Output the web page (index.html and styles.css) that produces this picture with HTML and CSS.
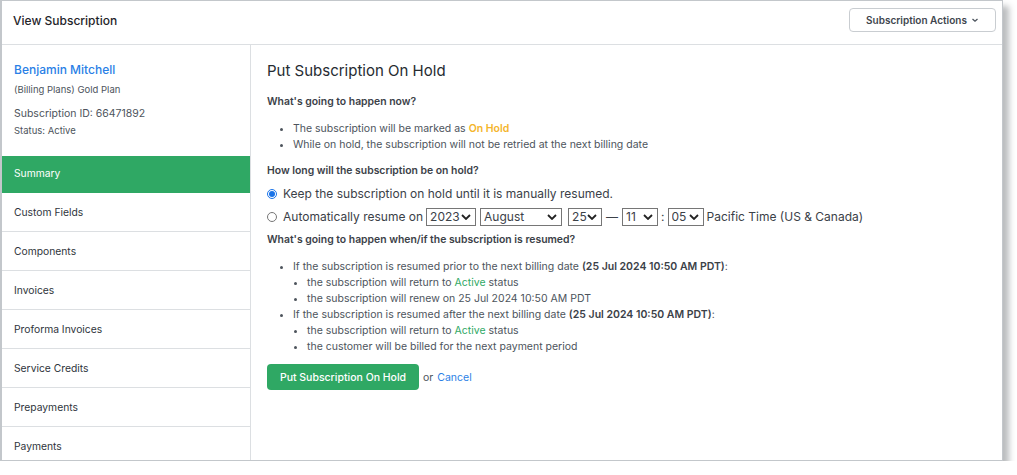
FILE: index.html
```html
<!DOCTYPE html>
<html lang="en">
<head>
    <meta charset="UTF-8">
    <meta name="viewport" content="width=device-width, initial-scale=1.0">
    <title>View Subscription</title>
    <link rel="stylesheet" href="styles.css">
</head>
<body>
    <div class="frame">
        <header class="topbar">
            <h1 class="page-title">View Subscription</h1>
            <button class="actions-btn">Subscription Actions
                <svg width="8" height="6" viewBox="0 0 8 6"><path d="M1.5 2l2.5 2.2L6.5 2" fill="none" stroke="#4a525c" stroke-width="1.3"/></svg>
            </button>
        </header>

        <div class="layout">
            <aside class="sidebar">
                <div class="customer">
                    <a class="customer-name" href="#">Benjamin Mitchell</a>
                    <div class="plan">(Billing Plans) Gold Plan</div>
                    <div class="sub-id">Subscription ID: 66471892</div>
                    <div class="status">Status: Active</div>
                </div>
                <nav class="nav">
                    <a class="nav-item active" href="#">Summary</a>
                    <a class="nav-item" href="#">Custom Fields</a>
                    <a class="nav-item" href="#">Components</a>
                    <a class="nav-item" href="#">Invoices</a>
                    <a class="nav-item" href="#">Proforma Invoices</a>
                    <a class="nav-item" href="#">Service Credits</a>
                    <a class="nav-item" href="#">Prepayments</a>
                    <a class="nav-item" href="#">Payments</a>
                </nav>
            </aside>

            <main class="content">
                <h2 class="content-title">Put Subscription On Hold</h2>

                <h3 class="question">What's going to happen now?</h3>
                <ul class="bullets">
                    <li>The subscription will be marked as <span class="on-hold">On Hold</span></li>
                    <li>While on hold, the subscription will not be retried at the next billing date</li>
                </ul>

                <h3 class="question">How long will the subscription be on hold?</h3>
                <div class="radios">
                    <label class="radio-row">
                        <input type="radio" name="hold" checked>
                        Keep the subscription on hold until it is manually resumed.
                    </label>
                    <label class="radio-row">
                        <input type="radio" name="hold">
                        Automatically resume on
                        <span class="sel w-year"><select><option>2023</option></select><svg viewBox="0 0 10 6"><path d="M1 1l4 4 4-4" fill="none" stroke="#222" stroke-width="1.8"/></svg></span>
                        <span class="sel w-month"><select><option>August</option></select><svg viewBox="0 0 10 6"><path d="M1 1l4 4 4-4" fill="none" stroke="#222" stroke-width="1.8"/></svg></span>
                        <span class="sel w-day"><select><option>25</option></select><svg viewBox="0 0 10 6"><path d="M1 1l4 4 4-4" fill="none" stroke="#222" stroke-width="1.8"/></svg></span>
                        <span class="dash">&mdash;</span>
                        <span class="sel w-hour"><select><option>11</option></select><svg viewBox="0 0 10 6"><path d="M1 1l4 4 4-4" fill="none" stroke="#222" stroke-width="1.8"/></svg></span>
                        :
                        <span class="sel w-min"><select><option>05</option></select><svg viewBox="0 0 10 6"><path d="M1 1l4 4 4-4" fill="none" stroke="#222" stroke-width="1.8"/></svg></span>
                        Pacific Time (US &amp; Canada)
                    </label>
                </div>

                <h3 class="question">What's going to happen when/if the subscription is resumed?</h3>
                <ul class="bullets last">
                    <li>If the subscription is resumed prior to the next billing date <b>(25 Jul 2024 10:50 AM PDT)</b>:
                        <ul>
                            <li>the subscription will return to <span class="active-word">Active</span> status</li>
                            <li>the subscription will renew on 25 Jul 2024 10:50 AM PDT</li>
                        </ul>
                    </li>
                    <li>If the subscription is resumed after the next billing date <b>(25 Jul 2024 10:50 AM PDT)</b>:
                        <ul>
                            <li>the subscription will return to <span class="active-word">Active</span> status</li>
                            <li>the customer will be billed for the next payment period</li>
                        </ul>
                    </li>
                </ul>

                <div class="form-actions">
                    <button class="primary-btn">Put Subscription On Hold</button>
                    <span class="or">or</span> <a class="cancel" href="#">Cancel</a>
                </div>
            </main>
        </div>
    </div>
</body>
</html>
```

FILE: styles.css
```css
* { box-sizing: border-box; }
body { margin: 0; background: #fff; font-family: Inter, "Noto Sans", sans-serif; color: #4b525b; }
a { text-decoration: none; }

.frame { width: 1003px; height: 461px; border: 1px solid #c3c7cb; border-left-width: 2px; background: #fff; box-shadow: 6px 6px 6px rgba(60, 66, 72, 0.35); overflow: hidden; }

.topbar { height: 44px; display: flex; align-items: flex-start; justify-content: space-between; padding: 7px 6px 0 11px; border-bottom: 1px solid #dcdfe2; }
.page-title { margin: 5px 0 0; font-size: 12px; line-height: 15px; font-weight: 500; color: #1f242a; }
.actions-btn { display: flex; align-items: center; justify-content: center; gap: 4px; width: 147px; height: 24px; padding: 0; white-space: nowrap; background: #fff; border: 1px solid #c9cdd1; border-radius: 4px; font-family: inherit; font-size: 10px; font-weight: 600; color: #3e454d; }

.layout { display: flex; height: 415px; }
.sidebar { width: 249px; flex-shrink: 0; border-right: 1px solid #dcdfe2; }
.customer { padding: 17px 12px 18px; }
.customer-name { display: block; font-size: 12px; font-weight: 500; color: #2a7fe6; line-height: 16px; }
.plan { font-size: 9.5px; line-height: 14px; margin-top: 5px; color: #4d545c; }
.sub-id { font-size: 10.5px; line-height: 14px; margin-top: 10px; color: #4d545c; }
.status { font-size: 9.5px; line-height: 14px; margin-top: 3px; color: #4d545c; }

.nav-item { display: block; height: 39px; line-height: 38px; padding: 0 12px; font-size: 10.3px; color: #2f353c; border-bottom: 1px solid #dcdfe2; }
.nav-item.active { background: #2fa864; color: #fff; height: 37px; line-height: 35px; border-bottom: none; }

.content { flex: 1; padding: 16px 16px; }
.content-title { margin: 0 0 14px; font-size: 15px; font-weight: 400; color: #262b31; line-height: 20px; }
.question { margin: 0; font-size: 10.4px; font-weight: 600; color: #3b4148; line-height: 14px; }

.bullets { margin: 12px 0 11px; padding-left: 26px; font-size: 10.5px; line-height: 16px; color: #4d545c; }
.bullets.last { margin-bottom: 9px; }
.bullets ul { margin: 0; padding-left: 14px; list-style: disc; }
.bullets b { font-weight: 600; color: #3b4148; }
.on-hold { color: #f4b52b; font-weight: 600; }
.active-word { color: #2fa864; }

.radios { margin: 4px 0 5px; }
.radio-row { display: flex; align-items: center; gap: 3px; font-size: 12px; color: #3b4148; height: 23px; }
.radio-row input { margin: 0 3px 0 0; width: 10px; height: 10px; accent-color: #1a73e8; }

.sel { position: relative; display: inline-block; height: 18px; border: 1px solid #767676; }
.sel select { appearance: none; -webkit-appearance: none; border: none; background: transparent; font-family: inherit; font-size: 12px; color: #3b4148; height: 16px; width: 100%; padding: 0 0 0 3px; line-height: 16px; }
.sel svg { position: absolute; right: 4px; top: 5px; width: 10px; height: 6px; pointer-events: none; }
.w-year { width: 50px; }
.w-month { width: 82px; margin-left: 1px; }
.w-day { width: 34px; margin-left: 3px; }
.dash { margin: 0 1px; }
.w-hour { width: 36px; }
.w-min { width: 36px; }

.form-actions { display: flex; align-items: center; gap: 4px; font-size: 10.5px; }
.primary-btn { height: 26px; width: 152px; background: #2fa864; color: #fff; border: none; border-radius: 4px; font-family: inherit; font-size: 10.5px; font-weight: 500; }
.or { color: #4d545c; }
.cancel { color: #2a7fe6; }
```
